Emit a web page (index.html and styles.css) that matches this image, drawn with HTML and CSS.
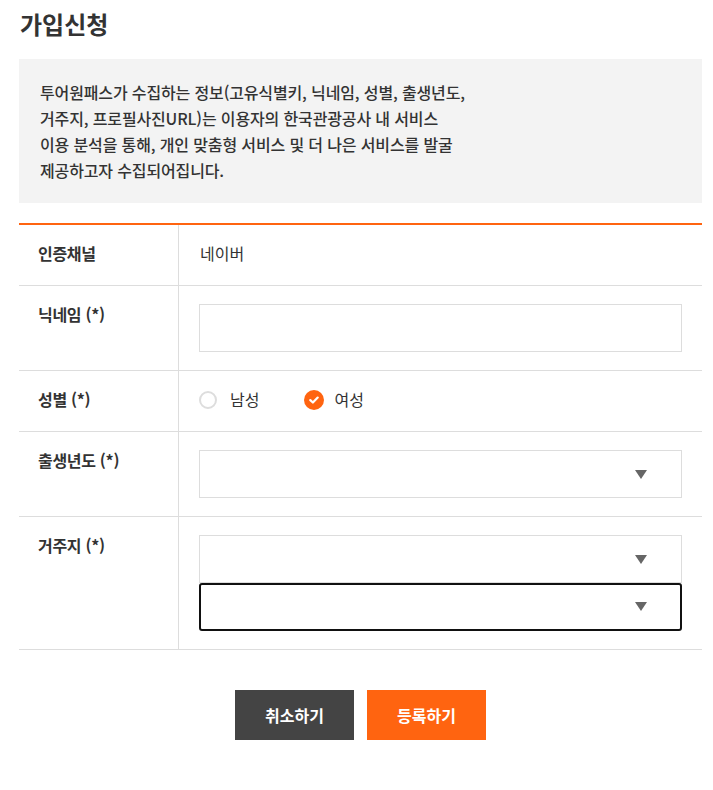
FILE: index.html
```html
<!DOCTYPE html>
<html lang="ko">
<head>
<meta charset="utf-8">
<link rel="stylesheet" href="styles.css">
</head>
<body>
<div class="page">
  <h1 class="title">가입신청</h1>
  <div class="notice">
    투어원패스가 수집하는 정보(고유식별키, 닉네임, 성별, 출생년도,<br>
    거주지, 프로필사진URL)는 이용자의 한국관광공사 내 서비스<br>
    이용 분석을 통해, 개인 맞춤형 서비스 및 더 나은 서비스를 발굴<br>
    제공하고자 수집되어집니다.
  </div>
  <div class="form">
    <div class="row">
      <div class="label">인증채널</div>
      <div class="value value-text">네이버</div>
    </div>
    <div class="row">
      <div class="label">닉네임 (*)</div>
      <div class="value"><div class="field"></div></div>
    </div>
    <div class="row">
      <div class="label">성별 (*)</div>
      <div class="value value-radio">
        <span class="radio"><span class="circle"></span>남성</span>
        <span class="radio checked"><span class="circle"><svg width="10" height="8" viewBox="0 0 10 8"><path d="M1.3 4.1 L3.9 6.5 L8.7 1.6" fill="none" stroke="#fff" stroke-width="2.2" stroke-linecap="round" stroke-linejoin="round"/></svg></span>여성</span>
      </div>
    </div>
    <div class="row">
      <div class="label">출생년도 (*)</div>
      <div class="value"><div class="field select"><span class="arrow"></span></div></div>
    </div>
    <div class="row">
      <div class="label">거주지 (*)</div>
      <div class="value">
        <div class="field select"><span class="arrow"></span></div>
        <div class="field select focus"><span class="arrow"></span></div>
      </div>
    </div>
  </div>
  <div class="buttons">
    <button class="btn cancel">취소하기</button>
    <button class="btn submit">등록하기</button>
  </div>
</div>
</body>
</html>
```

FILE: styles.css
```css
* { box-sizing: border-box; }
body {
  margin: 0;
  background: #fff;
  font-family: "Noto Sans CJK KR", "Noto Sans", sans-serif;
  color: #333;
}
.page {
  padding: 0 11px 0 19px;
}
.title {
  margin: 0;
  padding: 6px 0 0 1px;
  height: 59px;
  font-size: 24px;
  font-weight: 700;
  line-height: 36px;
  color: #333;
}
.notice {
  background: #f3f3f3;
  padding: 20px 21px;
  font-size: 16px;
  font-weight: 500;
  letter-spacing: -0.14px;
  line-height: 26px;
  color: #333;
}
.form {
  margin-top: 20px;
  border-top: 2px solid #ff6410;
}
.row {
  display: flex;
  border-bottom: 1px solid #ddd;
}
.label {
  width: 160px;
  flex: none;
  padding: 18px 19px 21px;
  border-right: 1px solid #ddd;
  font-size: 16px;
  letter-spacing: -0.3px;
  font-weight: 700;
  line-height: 21px;
  color: #333;
}
.value {
  flex: 1;
  padding: 18px 20px 18px 20px;
}
.value-text {
  padding: 18px 21px 21px;
  font-size: 16px;
  line-height: 21px;
}
.field {
  height: 48px;
  border: 1px solid #ddd;
  background: #fff;
  position: relative;
}
.select .arrow {
  position: absolute;
  right: 34px;
  top: 19px;
  width: 0;
  height: 0;
  border-left: 6px solid transparent;
  border-right: 6px solid transparent;
  border-top: 9px solid #666;
}
.field.focus {
  border: 2px solid #111;
  border-radius: 3px;
}
.field.focus .arrow {
  top: 17px;
  right: 33px;
}
.value-radio {
  display: flex;
  align-items: center;
  padding-top: 18px;
  padding-bottom: 21px;
  font-size: 16px;
  line-height: 21px;
}
.radio {
  display: inline-flex;
  align-items: center;
  margin-right: 45px;
}
.radio .circle {
  width: 18px;
  height: 18px;
  border-radius: 50%;
  border: 2px solid #ddd;
  margin-right: 13px;
  display: inline-flex;
  align-items: center;
  justify-content: center;
}
.radio.checked .circle {
  width: 20px;
  height: 20px;
  border: none;
  background: #ff6410;
  margin-right: 10px;
}
.buttons {
  display: flex;
  justify-content: center;
  gap: 13px;
  margin-top: 40px;
}
.btn {
  width: 119px;
  height: 50px;
  border: none;
  font-family: inherit;
  font-size: 16px;
  font-weight: 700;
  color: #fff;
  cursor: pointer;
}
.cancel { background: #444; }
.submit { background: #ff6410; }
```
